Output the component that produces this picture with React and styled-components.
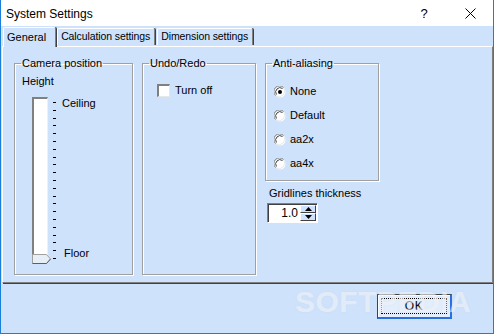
import React from 'react'
import styled, { createGlobalStyle } from 'styled-components';

const GlobalStyle = createGlobalStyle`
  html, body {
    margin: 0;
    padding: 0;
    background: #ffffff;
  }
  body {
    font-family: "Liberation Sans", Arial, sans-serif;
    font-size: 11px;
    color: #000;
  }
`;

const BG = '#cfe2fb';

const Window = styled.div`
  position: relative;
  width: 494px;
  height: 334px;
  box-sizing: border-box;
  border: 1px solid #1a7fd8;
  border-top: none;
  background: ${BG};
  display: flex;
  flex-direction: column;
  overflow: hidden;
`;

const TitleBar = styled.div`
  height: 26px;
  flex: none;
  background: #ffffff;
  display: flex;
  align-items: center;
  padding-left: 5px;
  font-size: 12px;
`;

const Title = styled.div`
  flex: 1;
  padding-top: 1px;
`;

const CaptionButton = styled.div`
  width: 46px;
  height: 26px;
  display: flex;
  align-items: center;
  justify-content: center;
  font-size: 13px;
`;

const Body = styled.div`
  flex: 1;
  display: flex;
  flex-direction: column;
  padding: 0 0 0 1px;
`;

const TabStrip = styled.div`
  height: 20px;
  display: flex;
  align-items: flex-end;
  padding-left: 1px;
  position: relative;
  z-index: 1;
`;

const Tab = styled.div`
  box-sizing: border-box;
  height: ${p => (p.$active ? '20px' : '17px')};
  margin-bottom: ${p => (p.$active ? '-1px' : '1px')};
  margin-right: ${p => (p.$active ? '0' : '1px')};
  padding: ${p => (p.$active ? '3px 9px 0 3px' : '1px 4px 0 3px')};
  background: ${BG};
  border-top: 1px solid #ffffff;
  border-left: 1px solid #ffffff;
  border-right: 1px solid #808080;
  box-shadow: 1px 0 0 #404040;
  border-top-left-radius: 2px;
  border-top-right-radius: 2px;
  font-size: ${p => (p.$active ? '11px' : '10.5px')};
  letter-spacing: ${p => (p.$active ? '0' : '-0.1px')};
  white-space: nowrap;
  margin-left: ${p => (p.$first ? '0' : '1px')};
`;

const Panel = styled.div`
  height: 237px;
  box-sizing: border-box;
  border-top: 1px solid #ffffff;
  border-left: 1px solid #ffffff;
  border-right: 1px solid #808080;
  border-bottom: 1px solid #808080;
  box-shadow: 1px 1px 0 #404040;
  display: flex;
  gap: 9px;
  padding: 10px 0 8px 11px;
`;

const Group = styled.fieldset`
  margin: 0;
  padding: 0;
  border: 1px solid #a0a0a0;
  box-shadow: 1px 1px 0 #ffffff, inset 1px 1px 0 #ffffff;
  min-width: 0;
  width: ${p => p.$w}px;
  height: ${p => p.$h}px;
  box-sizing: border-box;
`;

const Legend = styled.legend`
  padding: 0 1px;
  margin-left: 6px;
  font-size: 11px;
  line-height: 13px;
`;

const GroupContent = styled.div`
  display: flex;
  flex-direction: column;
  padding: ${p => p.$pad};
  gap: ${p => p.$gap || 0}px;
`;

const Column = styled.div`
  display: flex;
  flex-direction: column;
  width: 114px;
`;

const Label = styled.div`
  font-size: 11px;
  line-height: 13px;
`;

const SliderRow = styled.div`
  display: flex;
  margin-top: 9px;
  height: 165px;
`;

const Track = styled.div`
  position: relative;
  width: 16px;
  margin-left: 10px;
  box-sizing: border-box;
  background: #ffffff;
  border-top: 2px solid #808080;
  border-left: 2px solid #808080;
  border-right: 1px solid #f0f0f0;
  height: 165px;
`;

const Thumb = styled.svg`
  position: absolute;
  left: -2px;
  bottom: -2px;
`;

const Ticks = styled.div`
  display: flex;
  flex-direction: column;
  justify-content: space-between;
  margin-left: 5px;
  padding: 5px 0 3px;
`;

const Tick = styled.div`
  width: 3px;
  height: 1px;
  background: #000;
`;

const SliderLabels = styled.div`
  display: flex;
  flex-direction: column;
  justify-content: space-between;
  margin-left: 6px;
  padding: 0 0 2px;
`;

const SliderLabel = styled.div`
  font-size: 11px;
  line-height: 13px;
  margin-left: ${p => p.$ml || 0}px;
`;

const CheckRow = styled.div`
  display: flex;
  align-items: center;
  gap: 5px;
`;

const CheckBox = styled.div`
  width: 13px;
  height: 13px;
  box-sizing: border-box;
  background: #ffffff;
  border-top: 2px solid #808080;
  border-left: 2px solid #808080;
  border-right: 1px solid #e8e8e8;
  border-bottom: 1px solid #e8e8e8;
`;

const RadioRow = styled.div`
  display: flex;
  align-items: center;
  gap: 4px;
  height: 13px;
`;

const SpinBox = styled.div`
  display: flex;
  align-items: center;
  width: 50px;
  height: 19px;
  box-sizing: border-box;
  background: #ffffff;
  border-top: 1px solid #808080;
  border-left: 1px solid #808080;
  box-shadow: inset 1px 1px 0 #404040, 1px 1px 0 #ffffff;
  margin-top: 3px;
  margin-left: 2px;
  padding: 1px 1px 1px 2px;
`;

const SpinValue = styled.div`
  flex: 1;
  text-align: right;
  padding-right: 2px;
  font-size: 12px;
`;

const SpinButtons = styled.div`
  display: flex;
  flex-direction: column;
  width: 16px;
  height: 16px;
`;

const SpinButton = styled.div`
  flex: 1;
  display: flex;
  align-items: center;
  justify-content: center;
  background: ${BG};
  border-top: 1px solid #ffffff;
  border-left: 1px solid #ffffff;
  border-right: 1px solid #404040;
  border-bottom: 1px solid #404040;
  box-sizing: border-box;
`;

const Footer = styled.div`
  flex: 1;
  display: flex;
  justify-content: flex-end;
  align-items: flex-start;
  padding: 11px 41px 0 0;
`;

const OkButton = styled.div`
  width: 75px;
  height: 25px;
  box-sizing: border-box;
  border: 1px solid #404040;
  border-right: 2px solid #2a6fe0;
  border-bottom: 2px solid #2a6fe0;
  background: #e3eefc;
  box-shadow: inset 1px 1px 0 #ffffff;
  padding: 3px;
  display: flex;
`;

const FocusRect = styled.div`
  flex: 1;
  border: 1px dotted #000;
  display: flex;
  align-items: center;
  justify-content: center;
  font-size: 12px;
  letter-spacing: 0.5px;
`;

const Watermark = styled.div`
  position: absolute;
  left: 294px;
  top: 285px;
  font-family: "Liberation Sans", Arial, sans-serif;
  font-weight: bold;
  font-size: 30px;
  letter-spacing: 0.5px;
  color: rgba(255, 255, 255, 0.45);
  text-shadow: 0 0 2px rgba(200, 210, 230, 0.4);
  pointer-events: none;
`;

const Radio = ({ checked }) => (
  <svg width="12" height="12" viewBox="0 0 12 12">
    <circle cx="6" cy="6" r="5.5" fill="#fff" />
    <path d="M1.5 9.5 A5.5 5.5 0 0 1 9.5 1.5" stroke="#808080" strokeWidth="1" fill="none" />
    <path d="M2.5 8.5 A4.3 4.3 0 0 1 8.5 2.5" stroke="#404040" strokeWidth="1" fill="none" />
    <path d="M9.8 2.2 A5.5 5.5 0 0 1 2.2 9.8" stroke="#e8e8e8" strokeWidth="1" fill="none" />
    {checked && <circle cx="6" cy="6" r="2" fill="#000" />}
  </svg>
);

const Arrow = ({ up }) => (
  <svg width="7" height="4" viewBox="0 0 7 4">
    <polygon points={up ? '3.5,0 7,4 0,4' : '0,0 7,0 3.5,4'} fill="#000" />
  </svg>
);

export default function App() {
  const ticks = Array.from({ length: 21 });
  return (
    <>
      <GlobalStyle />
      <Window>
        <TitleBar>
          <Title>System Settings</Title>
          <CaptionButton>?</CaptionButton>
          <CaptionButton>
            <svg width="11" height="11" viewBox="0 0 11 11">
              <path d="M0.5 0.5 L10.5 10.5 M10.5 0.5 L0.5 10.5" stroke="#000" strokeWidth="1" />
            </svg>
          </CaptionButton>
        </TitleBar>
        <Body>
          <TabStrip>
            <Tab $active $first>General</Tab>
            <Tab>Calculation settings</Tab>
            <Tab>Dimension settings</Tab>
          </TabStrip>
          <Panel>
            <Group $w={119} $h={218}>
              <Legend>Camera position</Legend>
              <GroupContent $pad="5px 0 0 7px">
                <Label>Height</Label>
                <SliderRow>
                  <Track>
                    <Thumb width="19" height="10" viewBox="0 0 19 10">
                      <polygon points="0.5,0.5 14.5,0.5 18.5,5 14.5,9.5 0.5,9.5" fill="#e8eef6" stroke="#a0a0a0" />
                      <polyline points="0.5,9.5 14.5,9.5 18.5,5" fill="none" stroke="#606060" />
                    </Thumb>
                  </Track>
                  <Ticks>
                    {ticks.map((_, i) => <Tick key={i} />)}
                  </Ticks>
                  <SliderLabels>
                    <SliderLabel>Ceiling</SliderLabel>
                    <SliderLabel $ml={2}>Floor</SliderLabel>
                  </SliderLabels>
                </SliderRow>
              </GroupContent>
            </Group>
            <Group $w={114} $h={218}>
              <Legend>Undo/Redo</Legend>
              <GroupContent $pad="14px 0 0 14px">
                <CheckRow>
                  <CheckBox />
                  <Label>Turn off</Label>
                </CheckRow>
              </GroupContent>
            </Group>
            <Column>
              <Group $w={114} $h={124}>
                <Legend>Anti-aliasing</Legend>
                <GroupContent $pad="15px 0 0 8px" $gap={11}>
                  <RadioRow><Radio checked /><Label>None</Label></RadioRow>
                  <RadioRow><Radio /><Label>Default</Label></RadioRow>
                  <RadioRow><Radio /><Label>aa2x</Label></RadioRow>
                  <RadioRow><Radio /><Label>aa4x</Label></RadioRow>
                </GroupContent>
              </Group>
              <GridLabel>Gridlines thickness</GridLabel>
              <SpinBox>
                <SpinValue>1.0</SpinValue>
                <SpinButtons>
                  <SpinButton><Arrow up /></SpinButton>
                  <SpinButton><Arrow /></SpinButton>
                </SpinButtons>
              </SpinBox>
            </Column>
          </Panel>
          <Footer>
            <OkButton>
              <FocusRect>OK</FocusRect>
            </OkButton>
          </Footer>
        </Body>
        <Watermark>SOFTPEDIA</Watermark>
      </Window>
    </>
  );
}

const GridLabel = styled(Label)`
  margin-top: 6px;
  margin-left: 4px;
`;
